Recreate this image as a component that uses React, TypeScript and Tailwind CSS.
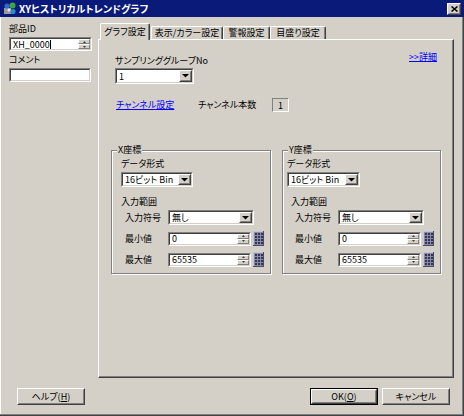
import React from "react";

type P = { className?: string; children?: React.ReactNode };

function Raised({ className = "", children }: P) {
  return (
    <div className={"border border-t-white border-l-white border-r-[#404040] border-b-[#404040] bg-[#d4d0c8] " + className}>
      <div className="w-full h-full border border-t-[#d4d0c8] border-l-[#d4d0c8] border-r-[#808080] border-b-[#808080] flex items-center justify-center">
        {children}
      </div>
    </div>
  );
}

function Sunken({ className = "", children }: P) {
  return (
    <div className={"border border-t-[#808080] border-l-[#808080] border-r-white border-b-white " + className}>
      <div className="w-full h-full border border-t-[#404040] border-l-[#404040] border-r-[#d4d0c8] border-b-[#d4d0c8] bg-white flex items-center overflow-hidden">
        {children}
      </div>
    </div>
  );
}

const Down = () => (
  <svg width="7" height="4" viewBox="0 0 7 4">
    <path d="M0 0h7L3.5 3.5z" fill="#000" />
  </svg>
);

function Drop({ className = "", text }: { className?: string; text: string }) {
  return (
    <Sunken className={className}>
      <span className="flex-1 pl-[2px] leading-none whitespace-nowrap">{text}</span>
      <Raised className="w-[13px] h-full shrink-0">
        <Down />
      </Raised>
    </Sunken>
  );
}

function Mini({ up }: { up?: boolean }) {
  return (
    <div className="flex-1 border border-t-white border-l-white border-r-[#808080] border-b-[#808080] bg-[#d4d0c8] flex items-center justify-center">
      <svg width="3" height="2" viewBox="0 0 3 2">
        <path d={up ? "M1.5 0L3 2H0z" : "M0 0h3L1.5 2z"} fill="#404040" />
      </svg>
    </div>
  );
}

function Spin() {
  return (
    <div className="flex flex-col w-[12px] h-full shrink-0">
      <Mini up />
      <Mini />
    </div>
  );
}

function Calc() {
  const cells: React.ReactNode[] = [];
  for (let r = 0; r < 4; r++) {
    for (let c = 0; c < 3; c++) {
      cells.push(<rect key={r + "-" + c} x={2 + c * 3} y={2 + r * 3} width="2" height="2" fill="#34344e" />);
    }
  }
  return (
    <svg width="11" height="15" viewBox="0 0 11 15" className="shrink-0 ml-[2px]">
      <rect x="0" y="0" width="11" height="15" fill="#8a8aac" />
      <rect x="0" y="0" width="11" height="1" fill="#c4c4d6" />
      <rect x="0" y="0" width="1" height="15" fill="#c4c4d6" />
      <rect x="10" y="0" width="1" height="15" fill="#4a4a62" />
      <rect x="0" y="14" width="11" height="1" fill="#4a4a62" />
      {cells}
    </svg>
  );
}

function NumRow({ label, value, rowL }: { label: string; value: string; rowL: string }) {
  return (
    <div className={"mt-[6px] flex items-center h-[15px] " + rowL}>
      <span className="w-[43px] shrink-0">{label}</span>
      <Sunken className="w-[83px] h-[14px]">
        <span className="flex-1 pl-[2px] leading-none">{value}</span>
        <Spin />
      </Sunken>
      <Calc />
    </div>
  );
}

function Group({
  title,
  w,
  padL,
  rangeL,
  rowL,
  dropW,
}: {
  title: string;
  w: string;
  padL: string;
  rangeL: string;
  rowL: string;
  dropW: string;
}) {
  return (
    <div className={"relative h-[124px] border border-[#808080] shadow-[inset_1px_1px_0_#ffffff,1px_1px_0_#ffffff] pt-[7px] " + w + " " + padL}>
      <span className="absolute top-[-7px] left-[5px] bg-[#d4d0c8] px-[1px]">{title}</span>
      <div>データ形式</div>
      <Drop className={"mt-[2px] h-[15px] " + dropW} text="16ビット Bin" />
      <div className={"mt-[9px] " + rangeL}>入力範囲</div>
      <div className={"mt-[2px] flex items-center h-[15px] " + rowL}>
        <span className="w-[43px] shrink-0">入力符号</span>
        <Drop className="w-[86px] h-[15px]" text="無し" />
      </div>
      <NumRow label="最小値" value="0" rowL={rowL} />
      <NumRow label="最大値" value="65535" rowL={rowL} />
    </div>
  );
}

const tabSel =
  "relative z-10 -mb-px h-[17px] bg-[#d4d0c8] border-t border-l border-r border-t-white border-l-white border-r-[#404040] shadow-[inset_-1px_0_0_#808080] rounded-t-[2px] flex items-center justify-center whitespace-nowrap";
const tabUn =
  "h-[13px] bg-[#d4d0c8] border-t border-l border-r border-t-white border-l-white border-r-[#404040] shadow-[inset_-1px_0_0_#808080] rounded-t-[2px] flex items-center justify-center whitespace-nowrap";

export default function App() {
  return (
    <div className="w-[464px] h-[416px] bg-[#d4d0c8] flex flex-col overflow-hidden text-[9px] leading-[12px] text-black font-['Noto_Sans_CJK_JP',sans-serif] [font-feature-settings:'palt'] shadow-[inset_-1px_-1px_0_#404040,inset_-2px_-2px_0_#808080,inset_1px_0_0_#ffffff]">
      {/* title bar */}
      <div className="h-[17px] shrink-0 bg-[#0a1a78] flex items-center pl-[3px] pr-[3px]">
        <svg width="14" height="13" viewBox="0 0 14 13">
          <rect x="1" y="6" width="7" height="6" fill="#9a9a9a" />
          <circle cx="4" cy="4" r="2.6" fill="#2f66d8" />
          <circle cx="9.5" cy="3.5" r="3" fill="#38a838" />
          <circle cx="10" cy="9.5" r="2.6" fill="#2a8cc8" />
          <circle cx="6" cy="8" r="1.5" fill="#e8e8e8" />
        </svg>
        <span className="ml-[2px] text-white font-bold text-[10px] leading-none whitespace-nowrap">XYヒストリカルトレンドグラフ</span>
        <div className="flex-1" />
        <Raised className="w-[14px] h-[12px]">
          <svg width="7" height="6" viewBox="0 0 7 6">
            <path d="M0.5 0.5L6.5 5.5M6.5 0.5L0.5 5.5" stroke="#000" strokeWidth="1.5" />
          </svg>
        </Raised>
      </div>

      {/* body */}
      <div className="flex h-[361px] shrink-0">
        <div className="w-[98px] shrink-0 pl-[9px] pt-[6px]">
          <div>部品ID</div>
          <Sunken className="mt-[2px] w-[83px] h-[14px]">
            <span className="pl-[2px] leading-none">XH_0000</span>
            <span className="w-px h-[9px] bg-black" />
            <div className="flex-1" />
            <Spin />
          </Sunken>
          <div className="mt-[3px]">コメント</div>
          <Sunken className="mt-[2px] w-[82px] h-[14px]" />
        </div>

        <div className="pt-[6px] flex flex-col">
          <div className="flex items-end h-[16px]">
            <div className={tabSel + " ml-[2px] w-[50px]"}>グラフ設定</div>
            <div className={tabUn + " ml-[1px] w-[72px]"}>表示/カラー設定</div>
            <div className={tabUn + " w-[47px]"}>警報設定</div>
            <div className={tabUn + " w-[56px]"}>目盛り設定</div>
          </div>
          <div className="w-[356px] h-[339px] border border-t-white border-l-white border-r-[#404040] border-b-[#404040] shadow-[inset_-1px_-1px_0_#808080] flex flex-col">
            <div className="flex">
              <div className="ml-[16px] mt-[15px]">
                <div className="whitespace-nowrap">サンプリンググループNo</div>
                <Drop className="mt-[1px] w-[79px] h-[16px]" text="1" />
              </div>
              <span className="ml-auto mr-[16px] mt-[11px] h-fit text-[#0000ff] underline">&gt;&gt;詳細</span>
            </div>
            <div className="mt-[14px] flex items-center h-[14px]">
              <span className="ml-[17px] w-[82px] shrink-0 text-[#0000ff] underline whitespace-nowrap">チャンネル設定</span>
              <span className="w-[74px] shrink-0 whitespace-nowrap">チャンネル本数</span>
              <div className="w-[17px] h-[14px] border border-t-[#808080] border-l-[#808080] border-r-white border-b-white flex items-center justify-center leading-none">
                1
              </div>
            </div>
            <div className="mt-[38px] ml-[12px] flex gap-[11px]">
              <Group title="X座標" w="w-[160px]" padL="pl-[9px]" rangeL="" rowL="ml-[4px]" dropW="w-[72px]" />
              <Group title="Y座標" w="w-[159px]" padL="pl-[4px]" rangeL="ml-[4px]" rowL="ml-[8px]" dropW="w-[73px]" />
            </div>
          </div>
        </div>
      </div>

      {/* bottom buttons */}
      <div className="flex items-start pt-[10px] pl-[17px] pr-[14px]">
        <Raised className="w-[68px] h-[17px]">
          <span className="leading-none">
            ヘルプ(<span className="underline">H</span>)
          </span>
        </Raised>
        <div className="flex-1" />
        <div className="border border-black w-[68px] h-[17px]">
          <Raised className="w-full h-full">
            <span className="leading-none">
              OK(<span className="underline">O</span>)
            </span>
          </Raised>
        </div>
        <Raised className="ml-[4px] w-[68px] h-[17px]">
          <span className="leading-none">キャンセル</span>
        </Raised>
      </div>
    </div>
  );
}
